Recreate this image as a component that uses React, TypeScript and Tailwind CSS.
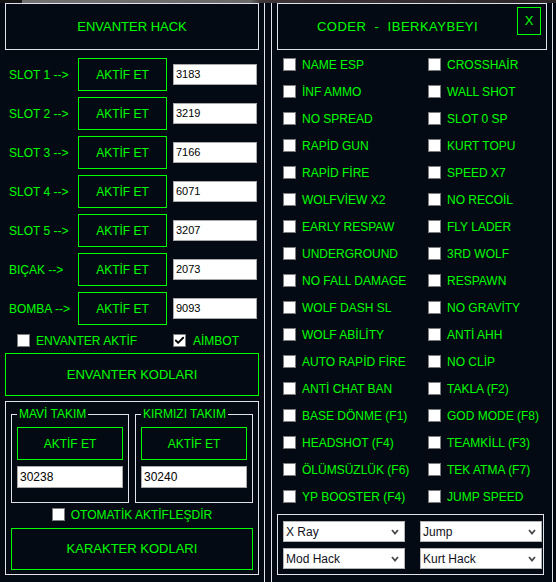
import { Check } from "lucide-react";

const slots = [
  { label: "SLOT 1 -->", value: "3183" },
  { label: "SLOT 2 -->", value: "3219" },
  { label: "SLOT 3 -->", value: "7166" },
  { label: "SLOT 4 -->", value: "6071" },
  { label: "SLOT 5 -->", value: "3207" },
  { label: "BIÇAK -->", value: "2073" },
  { label: "BOMBA -->", value: "9093" },
];

const leftHacks = [
  "NAME ESP",
  "İNF AMMO",
  "NO SPREAD",
  "RAPİD GUN",
  "RAPİD FİRE",
  "WOLFVİEW X2",
  "EARLY RESPAW",
  "UNDERGROUND",
  "NO FALL DAMAGE",
  "WOLF DASH SL",
  "WOLF ABİLİTY",
  "AUTO RAPİD FİRE",
  "ANTİ CHAT BAN",
  "BASE DÖNME (F1)",
  "HEADSHOT (F4)",
  "ÖLÜMSÜZLÜK (F6)",
  "YP BOOSTER (F4)",
];

const rightHacks = [
  "CROSSHAİR",
  "WALL SHOT",
  "SLOT 0 SP",
  "KURT TOPU",
  "SPEED X7",
  "NO RECOİL",
  "FLY LADER",
  "3RD WOLF",
  "RESPAWN",
  "NO GRAVİTY",
  "ANTİ AHH",
  "NO CLİP",
  "TAKLA (F2)",
  "GOD MODE (F8)",
  "TEAMKİLL (F3)",
  "TEK ATMA (F7)",
  "JUMP SPEED",
];

const CheckBox = ({ checked = false }: { checked?: boolean }) => (
  <span className="w-[13px] h-[13px] shrink-0 bg-white border border-[#7c7c7c] flex items-center justify-center">
    {checked && <Check className="w-[11px] h-[11px] text-black" strokeWidth={4} />}
  </span>
);

const GreenButton = ({ children, className }: { children: React.ReactNode; className: string }) => (
  <div className={`border border-[#00ff00] text-[#00ff00] flex items-center justify-center ${className}`}>
    {children}
  </div>
);

const ComboBox = ({ text }: { text: string }) => (
  <div className="h-[21px] bg-white border border-[#b4b4b4] flex items-center justify-between pl-[2px] pr-[5px] text-[12px] text-[#101020]">
    <span>{text}</span>
    <svg width="8" height="6" viewBox="0 0 8 6">
      <polyline points="1,1 4,4.5 7,1" fill="none" stroke="#4a4a4a" strokeWidth="1.8" />
    </svg>
  </div>
);

const App = () => {
  return (
    <div className="w-[556px] h-[582px] overflow-hidden bg-[#030a14] flex flex-col font-['Liberation_Sans',Arial,sans-serif]">
      {/* desktop strip above the window */}
      <div className="h-[3px] shrink-0 bg-[linear-gradient(90deg,#141414_0%,#141414_4%,#727272_4%,#6a6a6a_45%,#3d3438_47%,#2c2629_100%)]" />

      <div className="flex flex-1 min-h-0">
        {/* inventory panel */}
        <div className="w-[265px] shrink-0 border-r border-[#dfe4ea] px-[5px] flex flex-col">
          <div className="h-[47px] border border-[#dfe4ea] flex items-center justify-center text-[#00ff00] text-[13px]">
            ENVANTER HACK
          </div>

          <div className="mt-[8px] flex flex-col gap-[6px]">
            {slots.map((s) => (
              <div key={s.label} className="h-[33px] flex items-center">
                <span className="w-[73px] pl-[4px] text-[12px] text-[#00ff00] whitespace-nowrap">{s.label}</span>
                <GreenButton className="w-[89px] h-[33px] text-[12px]">AKTİF ET</GreenButton>
                <div className="ml-[6px] w-[84px] h-[21px] bg-white border border-[#a9a9a9] flex items-center pl-[2px] text-[11px] text-black">
                  {s.value}
                </div>
              </div>
            ))}
          </div>

          <div className="mt-[9px] h-[13px] flex items-center text-[12px] text-[#00ff00]">
            <div className="w-[168px] pl-[12px] flex items-center gap-[6px]">
              <CheckBox />
              <span>ENVANTER AKTİF</span>
            </div>
            <div className="flex items-center gap-[7px]">
              <CheckBox checked />
              <span>AİMBOT</span>
            </div>
          </div>

          <GreenButton className="mt-[6px] h-[43px] text-[13px]">ENVANTER KODLARI</GreenButton>

          {/* team codes */}
          <div className="mt-[5px] h-[174px] border border-[#dfe4ea] px-[5px] pt-[5px] pb-[4px] flex flex-col">
            <div className="grid grid-cols-[118px_118px] gap-x-[6px]">
              {[
                { name: "MAVİ TAKIM", code: "30238" },
                { name: "KIRMIZI TAKIM", code: "30240" },
              ].map((t) => (
                <fieldset key={t.name} className="border border-[#dfe4ea] px-[5px] pb-[14px]">
                  <legend className="px-[2px] text-[12px] leading-[14px] text-[#00ff00]">{t.name}</legend>
                  <GreenButton className="mt-[6px] h-[33px] text-[12px]">AKTİF ET</GreenButton>
                  <div className="mt-[6px] h-[22px] bg-white border border-[#a9a9a9] flex items-center pl-[2px] text-[12px] text-black">
                    {t.code}
                  </div>
                </fieldset>
              ))}
            </div>

            <div className="mt-[5px] h-[13px] flex items-center justify-center gap-[6px] text-[12px] text-[#00ff00]">
              <CheckBox />
              <span>OTOMATİK AKTİFLEŞDİR</span>
            </div>

            <GreenButton className="mt-[7px] h-[42px] text-[13px]">KARAKTER KODLARI</GreenButton>
          </div>
        </div>

        {/* cheats panel */}
        <div className="ml-[6px] w-[282px] shrink-0 border-x border-[#dfe4ea] px-[5px] flex flex-col">
          <div className="h-[47px] border border-[#dfe4ea] flex">
            <div className="flex-1 flex items-center justify-center text-[#00ff00] text-[13px] tracking-[0.5px] whitespace-pre">
              {"CODER  -  IBERKAYBEYI"}
            </div>
            <GreenButton className="mt-[3px] mr-[5px] w-[24px] h-[28px] text-[13px]">X</GreenButton>
          </div>

          <div className="mt-[8px] pl-[6px] grid grid-cols-[145px_1fr] gap-y-[14px] text-[12px] text-[#00ff00]">
            {leftHacks.map((l, i) => [
              <div key={l} className="h-[13px] flex items-center gap-[6px] whitespace-nowrap">
                <CheckBox />
                <span>{l}</span>
              </div>,
              <div key={rightHacks[i]} className="h-[13px] flex items-center gap-[6px] whitespace-nowrap">
                <CheckBox />
                <span>{rightHacks[i]}</span>
              </div>,
            ])}
          </div>

          <div className="mt-[11px] w-[267px] h-[61px] border border-[#dfe4ea] pl-[5px] pt-[6px]">
            <div className="grid grid-cols-[122px_122px] gap-x-[15px] gap-y-[6px]">
              <ComboBox text="X Ray" />
              <ComboBox text="Jump" />
              <ComboBox text="Mod Hack" />
              <ComboBox text="Kurt Hack" />
            </div>
          </div>
        </div>
      </div>
    </div>
  );
};

export default App;
